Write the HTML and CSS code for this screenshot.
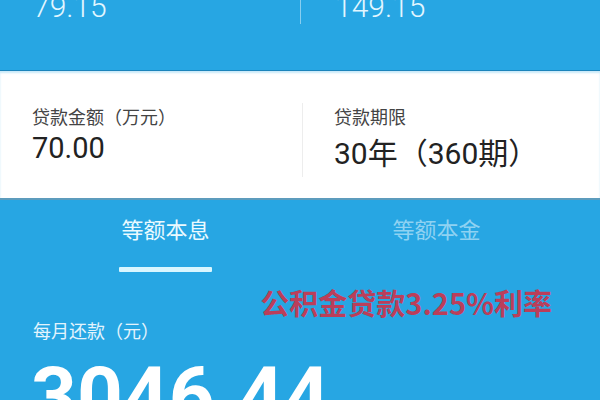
FILE: index.html
```html
<!DOCTYPE html>
<html lang="zh-CN">
<head>
<meta charset="utf-8">
<title>房贷计算</title>
<link rel="stylesheet" href="styles.css">
</head>
<body>
<div class="screen">
  <section class="header">
    <div class="header-cell"><span class="header-num">79.15</span></div>
    <div class="header-cell header-cell--right"><span class="header-num">149.15</span></div>
  </section>
  <section class="summary">
    <div class="summary-cell">
      <div class="summary-label">贷款金额（万元）</div>
      <div class="summary-value">70.00</div>
    </div>
    <div class="summary-cell summary-cell--right">
      <div class="summary-label">贷款期限</div>
      <div class="summary-value summary-value--term">30年（360期）</div>
    </div>
  </section>
  <nav class="tabs">
    <div class="tab tab--active"><span class="tab-text">等额本息</span><span class="tab-bar"></span></div>
    <div class="tab"><span class="tab-text">等额本金</span></div>
  </nav>
  <section class="result">
    <div class="note">公积金贷款3.25%利率</div>
    <div class="result-label">每月还款（元）</div>
    <div class="result-value">3046.44</div>
  </section>
</div>
</body>
</html>
```
FILE: styles.css
```css
* { box-sizing: border-box; }
html, body { margin: 0; padding: 0; }
body {
  font-family: Roboto, "Noto Sans CJK SC", sans-serif;
  background: #27a6e3;
}
.screen {
  width: 600px;
  height: 400px;
  overflow: hidden;
  background: #27a6e3;
}
.header {
  height: 71px;
  display: grid;
  grid-template-columns: 300px 300px;
  align-items: start;
  border-bottom: 1px solid #1b84bb;
}
.header-cell {
  margin-top: -8px;
  height: 32px;
  padding-left: 33px;
}
.header-cell--right {
  border-left: 1px solid rgba(255,255,255,0.45);
  padding-left: 34px;
}
.header-num {
  display: block;
  font-size: 30px;
  line-height: 30px;
  font-weight: 300;
  color: #e2f6ff;
}
.summary {
  background: #fff;
  display: grid;
  grid-template-columns: 302px 1fr;
  padding: 32px 0 21px;
  box-shadow: inset 0 2px 2px rgba(39,166,227,0.25);
  border-bottom: 2px solid #5c9cbd;
}
.summary-cell {
  padding: 3px 0 5px 32px;
}
.summary-cell--right {
  border-left: 1px solid #ededed;
  padding-left: 31px;
}
.summary-label {
  font-size: 18px;
  line-height: 24px;
  color: #444;
}
.summary-value {
  font-size: 29px;
  line-height: 36px;
  color: #222;
}
.summary-value--term {
  margin-top: 6px;
  font-size: 30px;
}
.tabs {
  display: grid;
  grid-template-columns: 271px 271px;
  padding: 16px 28px 0 30px;
  height: 72px;
}
.tab {
  display: flex;
  flex-direction: column;
  align-items: center;
}
.tab-text {
  font-size: 22px;
  line-height: 30px;
  color: #8fd2f2;
}
.tab--active .tab-text { color: #eafaff; }
.tab-bar {
  width: 93px;
  height: 5px;
  margin-top: 21px;
  background: #d9f6ff;
  border-radius: 1px;
}
.result {
  padding: 13px 0 0 33px;
}
.note {
  text-align: right;
  padding-right: 48px;
  font-family: "Noto Sans CJK SC", sans-serif;
  font-weight: 700;
  font-size: 29px;
  line-height: 35px;
  color: #bb3e5a;
}
.result-label {
  font-size: 18px;
  line-height: 24px;
  color: #e3f4fd;
}
.result-value {
  margin-top: 7px;
  margin-left: -2px;
  font-size: 80px;
  line-height: 90px;
  font-weight: 700;
  color: #fff;
}
```
